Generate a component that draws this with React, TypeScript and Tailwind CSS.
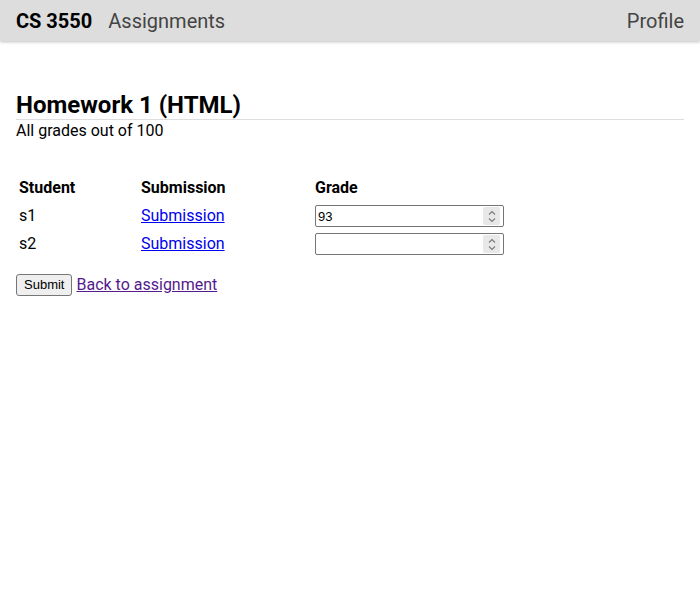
import { useState } from "react";

const rows = [
  { student: "s1", grade: "93" },
  { student: "s2", grade: "" },
];

function NavBar() {
  return (
    <header className="flex items-center justify-between h-[41px] px-4 bg-[#dddddd] shadow-[0_1px_3px_rgba(0,0,0,0.25)] text-[20px]">
      <nav className="flex items-baseline gap-4">
        <span className="font-bold text-black">CS 3550</span>
        <a href="#" className="text-[#444444]">
          Assignments
        </a>
      </nav>
      <a href="#" className="text-[#444444]">
        Profile
      </a>
    </header>
  );
}

function Spinner() {
  return (
    <span className="absolute right-[4px] top-[2px] flex items-center justify-center w-[17px] h-[18px] bg-[#e8e8e8] rounded-[2px] pointer-events-none">
      <svg width="8" height="13" viewBox="0 0 8 13" fill="none" stroke="#7a7a7a" strokeWidth="1.1">
        <path d="M1 4.5 L4 1.5 L7 4.5" />
        <path d="M1 8.5 L4 11.5 L7 8.5" />
      </svg>
    </span>
  );
}

function App() {
  const [grades, setGrades] = useState(rows.map((r) => r.grade));

  return (
    <div className="min-h-[600px] bg-white font-['Roboto',sans-serif] text-black">
      <NavBar />
      <main className="px-4 pt-[50px]">
        <h1 className="text-[24px] font-bold leading-[28px] border-b border-[#dddddd]">
          Homework 1 (HTML)
        </h1>
        <p className="text-base leading-[22px]">All grades out of 100</p>

        <form className="mt-[31px]">
          <table className="border-separate border-spacing-[2px]">
            <thead>
              <tr>
                <th className="w-[120px] p-px text-left font-bold leading-[24px]">
                  Student
                </th>
                <th className="w-[172px] p-px text-left font-bold leading-[24px]">
                  Submission
                </th>
                <th className="p-px text-left font-bold leading-[24px]">Grade</th>
              </tr>
            </thead>
            <tbody>
              {rows.map((r, i) => (
                <tr key={r.student}>
                  <td className="p-px leading-[24px]">{r.student}</td>
                  <td className="p-px leading-[24px]">
                    <a href="#" className="text-[#0000ee] underline">
                      Submission
                    </a>
                  </td>
                  <td className="p-px">
                    <div className="relative w-[189px]">
                      <input
                        type="number"
                        value={grades[i]}
                        onChange={(e) => {
                          const next = [...grades];
                          next[i] = e.target.value;
                          setGrades(next);
                        }}
                        className="block w-[189px] h-[22px] px-[2px] border border-[#767676] rounded-[2px] text-[13px] font-['Liberation_Sans',sans-serif] [appearance:textfield] [&::-webkit-inner-spin-button]:appearance-none"
                      />
                      <Spinner />
                    </div>
                  </td>
                </tr>
              ))}
            </tbody>
          </table>

          <div className="flex items-center gap-1 mt-[14px]">
            <button
              type="button"
              className="h-[22px] px-[7px] text-[13px] font-['Liberation_Sans',sans-serif] bg-[#efefef] border border-[#767676] rounded-[3px]"
            >
              Submit
            </button>
            <a href="#" className="text-[#551a8b] underline">
              Back to assignment
            </a>
          </div>
        </form>
      </main>
    </div>
  );
}

export default App;
